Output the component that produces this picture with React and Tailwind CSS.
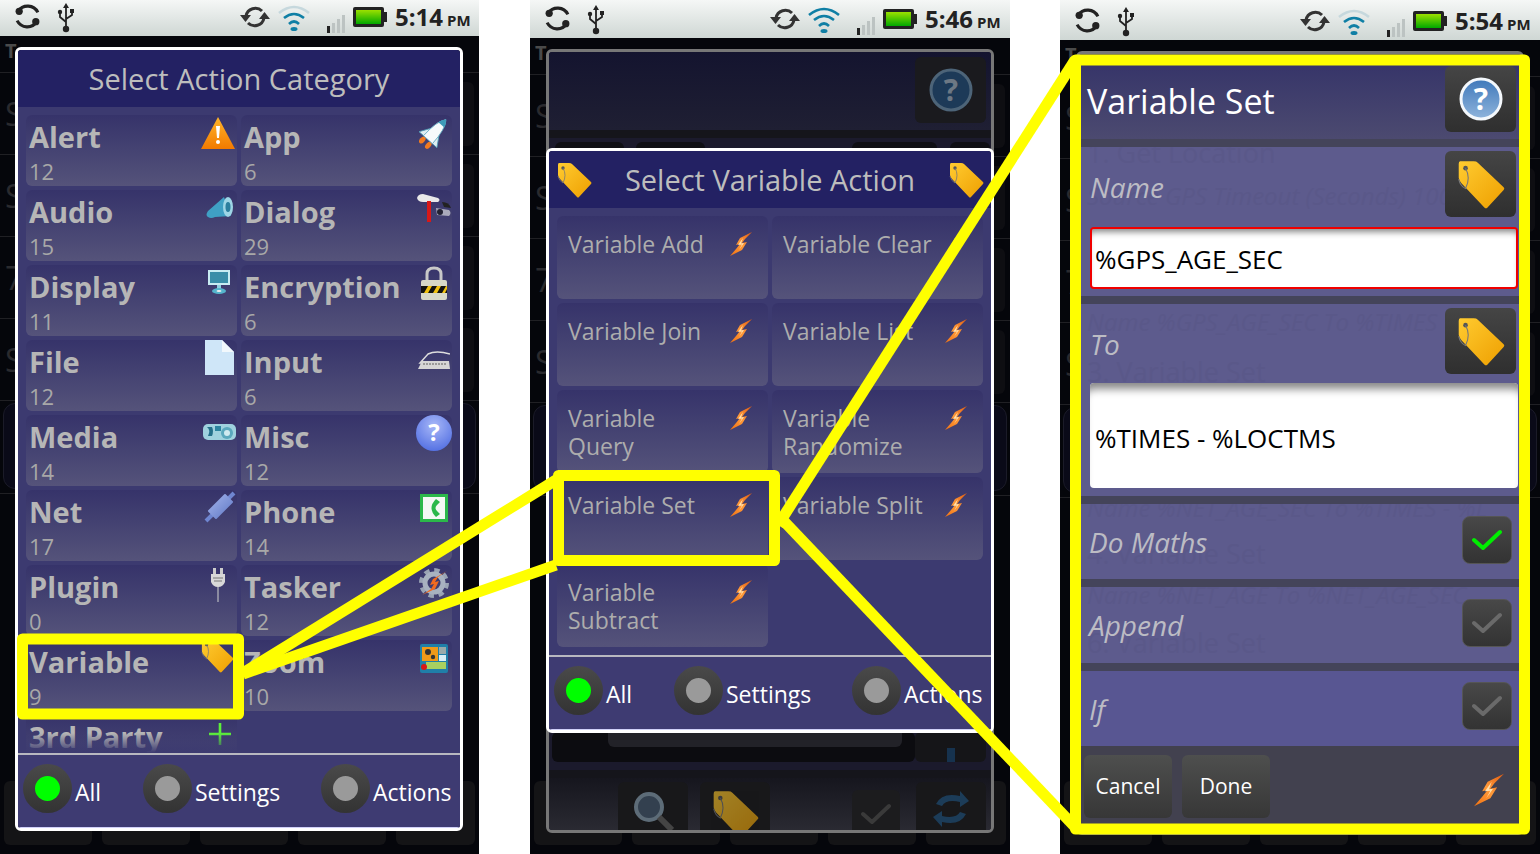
const font = { fontFamily: '"Open Sans", "Noto Sans", sans-serif' };

/* ---------------- ICONS ---------------- */

function SharedDefs() {
  return (
    <svg className="absolute w-0 h-0">
      <defs>
        <linearGradient id="tagFill" x1="0" y1="0" x2="1" y2="1">
          <stop offset="0" stopColor="#ffcb30" />
          <stop offset="1" stopColor="#ee9f00" />
        </linearGradient>
        <linearGradient id="boltFill" x1="1" y1="0" x2="0" y2="1">
          <stop offset="0" stopColor="#e05a10" />
          <stop offset="0.5" stopColor="#ff9a3a" />
          <stop offset="1" stopColor="#f07010" />
        </linearGradient>
        <linearGradient id="warnFill" x1="0" y1="0" x2="0" y2="1">
          <stop offset="0" stopColor="#ffb52a" />
          <stop offset="1" stopColor="#f27a00" />
        </linearGradient>
        <linearGradient id="battFill" x1="0" y1="0" x2="0" y2="1">
          <stop offset="0" stopColor="#9be000" />
          <stop offset="1" stopColor="#00a800" />
        </linearGradient>
        <radialGradient id="qFill" cx="0.5" cy="0.3" r="0.8">
          <stop offset="0" stopColor="#a8b8f8" />
          <stop offset="1" stopColor="#4a68e0" />
        </radialGradient>
        <linearGradient id="helpFill" x1="0" y1="0" x2="0" y2="1">
          <stop offset="0" stopColor="#3f78ba" />
          <stop offset="1" stopColor="#8fb4dc" />
        </linearGradient>
        <linearGradient id="cableFill" x1="0" y1="0" x2="1" y2="1">
          <stop offset="0" stopColor="#a4b4ec" />
          <stop offset="1" stopColor="#5f78c4" />
        </linearGradient>
      </defs>
    </svg>
  );
}

function Tag({ className }) {
  return (
    <svg viewBox="0 0 36 36" className={className}>
      <path d="M3 1 H13 Q15 1 16 2 L35 20 Q36 21 35 22 L23 35 Q22 36 21 35 L4 17 Q2 15 2 13 V3 Q2 1 3 1 Z" fill="url(#tagFill)" />
      <circle cx="7" cy="6" r="1.7" fill="#555" />
      <path d="M7 6 Q11 13 7 21 Q3 19 2 14" fill="none" stroke="#777" strokeWidth="0.8" />
    </svg>
  );
}

function Bolt({ className }) {
  return (
    <svg viewBox="0 0 22 24" className={className}>
      <polygon points="22,0 10,6 6,13 10,12 6,17 0,24 12,18 17,10 12,11 15,7" fill="url(#boltFill)" />
      <polygon points="13,6 8,13 12,12.5 9,18 14,11 11,11.5" fill="#ffe2b0" />
    </svg>
  );
}

function SyncDots({ className }) {
  return (
    <svg viewBox="0 0 26 26" className={className}>
      <path d="M4 8 A 11 11 0 0 1 23 9" fill="none" stroke="#222" strokeWidth="3" />
      <path d="M22 18 A 11 11 0 0 1 3 17" fill="none" stroke="#222" strokeWidth="3" />
      <circle cx="5" cy="8" r="3.5" fill="#222" />
      <circle cx="21" cy="18" r="3.5" fill="#222" />
    </svg>
  );
}

function Usb({ className }) {
  return (
    <svg viewBox="0 0 18 30" className={className}>
      <polygon points="9,0 12,5 6,5" fill="#222" />
      <path d="M9 4 V26 M3 10 V14 L9 19 M15 9 V12 L9 16" fill="none" stroke="#222" strokeWidth="1.8" />
      <circle cx="9" cy="26" r="3.2" fill="#222" />
      <circle cx="3" cy="9" r="2.2" fill="#222" />
      <rect x="13" y="6" width="4" height="4" fill="#222" />
    </svg>
  );
}

function SyncArrows({ className }) {
  return (
    <svg viewBox="0 0 30 26" className={className}>
      <path d="M6 12 A 9.5 9.5 0 0 1 22 7" fill="none" stroke="#333" strokeWidth="3" />
      <path d="M24 14 A 9.5 9.5 0 0 1 8 19" fill="none" stroke="#333" strokeWidth="3" />
      <polygon points="0,11 11,11 5.5,18" fill="#333" />
      <polygon points="19,15 30,15 24.5,8" fill="#333" />
    </svg>
  );
}

function Wifi({ className, dim }) {
  return (
    <svg viewBox="0 0 32 28" className={className}>
      <path d="M1 9 Q16 -3 31 9" fill="none" stroke={dim ? "#c6d8dd" : "#0f7fa5"} strokeWidth="2.6" />
      <path d="M6 14 Q16 6 26 14" fill="none" stroke="#0f7fa5" strokeWidth="2.6" />
      <path d="M11 20 Q16 15 21 20" fill="none" stroke="#0f7fa5" strokeWidth="2.6" />
      <ellipse cx="16" cy="25" rx="3.5" ry="2" fill="#0f7fa5" />
    </svg>
  );
}

function Signal({ className }) {
  return (
    <svg viewBox="0 0 18 18" className={className}>
      <rect x="0" y="11" width="3" height="7" fill="#222" />
      <rect x="5" y="8" width="3" height="10" fill="#bcc3c2" />
      <rect x="10" y="4" width="3" height="14" fill="#bcc3c2" />
      <rect x="15" y="0" width="3" height="18" fill="#bcc3c2" />
    </svg>
  );
}

function Battery({ className }) {
  return (
    <svg viewBox="0 0 35 20" className={className}>
      <rect x="0" y="0" width="31" height="20" rx="2" fill="#222" />
      <rect x="3" y="3" width="25" height="14" fill="url(#battFill)" />
      <rect x="31" y="5" width="3" height="10" fill="#222" />
    </svg>
  );
}

function Warning({ className }) {
  return (
    <svg viewBox="0 0 34 32" className={className}>
      <path d="M17 0 L34 32 H0 Z" fill="url(#warnFill)" />
      <path d="M15 9 H19 L18 21 H16 Z" fill="#fff" />
      <circle cx="17" cy="25" r="2" fill="#fff" />
    </svg>
  );
}

function Rocket({ className }) {
  return (
    <svg viewBox="0 0 30 33" className={className}>
      <g transform="rotate(42 15 16)">
        <ellipse cx="11" cy="29" rx="2.5" ry="4" fill="#f07a20" />
        <ellipse cx="19" cy="29" rx="2.5" ry="4" fill="#f07a20" />
        <path d="M10 14 L3 25 H10 Z M20 14 L27 25 H20 Z" fill="#dfeef2" stroke="#4f9fb8" strokeWidth="0.8" />
        <path d="M15 -2 Q21 5 21 25 H9 Q9 5 15 -2 Z" fill="#f6fafb" stroke="#5aa7c0" strokeWidth="0.8" />
        <path d="M15 -2 Q18 1 19 5 H11 Q12 1 15 -2 Z" fill="#3d9ab8" />
      </g>
    </svg>
  );
}

function Megaphone({ className }) {
  return (
    <svg viewBox="0 0 29 25" className={className}>
      <path d="M19 1 L3 15 Q0 19 3 21 Q6 23 10 21 L26 20 Z" fill="#3fa0c4" />
      <ellipse cx="23" cy="11" rx="5" ry="10" fill="#9ed6e6" />
      <ellipse cx="23" cy="11" rx="2.5" ry="5" fill="#2c7f9e" />
    </svg>
  );
}

function Tools({ className }) {
  return (
    <svg viewBox="0 0 36 30" className={className}>
      <path d="M1 5 Q2 1 7 1 L22 5 Q25 7 22 9 L7 9 Q2 9 1 5 Z" fill="#e8e8e8" />
      <rect x="11" y="8" width="4" height="21" fill="#d81818" />
      <path d="M20 15 L33 17 Q36 20 33 23 L21 22 Z" fill="#aab" />
      <circle cx="24" cy="19" r="3" fill="#223" />
      <path d="M26 9 Q33 9 35 15 L28 14 Z" fill="#222" />
    </svg>
  );
}

function Monitor({ className }) {
  return (
    <svg viewBox="0 0 22 25" className={className}>
      <rect x="0" y="0" width="22" height="15" fill="#c8ecf2" />
      <rect x="2" y="2" width="18" height="11" fill="#3a8ea8" />
      <rect x="9" y="15" width="4" height="4" fill="#8fd0e0" />
      <ellipse cx="11" cy="21" rx="7" ry="3" fill="#55b5cc" />
      <ellipse cx="11" cy="21" rx="2.5" ry="1" fill="#eee" />
    </svg>
  );
}

function Lock({ className }) {
  return (
    <svg viewBox="0 0 26 34" className={className}>
      <path d="M6 16 V8 Q6 2 13 2 Q20 2 20 8 V16" fill="none" stroke="#c8c8c8" strokeWidth="3" />
      <rect x="0" y="14" width="26" height="20" rx="2" fill="#d8d8c8" />
      <rect x="0" y="20" width="26" height="7" fill="#111" />
      <path d="M3 27 L7 20 H11 L7 27 Z M12 27 L16 20 H20 L16 27 Z M21 27 L25 20 H26 V23 L24 27 Z" fill="#f0c010" />
    </svg>
  );
}

function FileIcon({ className }) {
  return (
    <svg viewBox="0 0 29 35" className={className}>
      <path d="M0 0 H17 L29 12 V35 H0 Z" fill="#cfe6f8" />
      <path d="M17 0 L29 12 H17 Z" fill="#f2f8fc" />
    </svg>
  );
}

function Keyboard({ className }) {
  return (
    <svg viewBox="0 0 32 20" className={className}>
      <path d="M32 3 Q18 -1 10 3 L2 12 H30" fill="none" stroke="#ddd" strokeWidth="1.5" />
      <path d="M4 10 H31 L32 18 H0 Z" fill="#d6d6d6" />
      <path d="M5 13 H28" stroke="#9a9a9a" strokeWidth="2" strokeDasharray="2 1" />
    </svg>
  );
}

function Camera({ className }) {
  return (
    <svg viewBox="0 0 33 18" className={className}>
      <rect x="0" y="1" width="33" height="16" rx="5" fill="#9fd2de" />
      <path d="M4 4 Q8 7 5 13 H9 Q11 8 9 4 Z" fill="#24708a" />
      <rect x="12" y="3" width="6" height="5" fill="#2c85a0" />
      <circle cx="24" cy="10" r="6" fill="#5aa8bd" />
      <circle cx="24" cy="10" r="3" fill="#cfeaf0" />
    </svg>
  );
}

function QuestionBall({ className }) {
  return (
    <svg viewBox="0 0 36 36" className={className}>
      <circle cx="18" cy="18" r="18" fill="url(#qFill)" />
      <text x="18" y="26" textAnchor="middle" fontSize="24" fontWeight="700" fill="#fff" style={font}>?</text>
    </svg>
  );
}

function Cable({ className }) {
  return (
    <svg viewBox="0 0 32 32" className={className}>
      <path d="M30 2 L2 30" stroke="#6f86d0" strokeWidth="4" />
      <path d="M21 4 L28 11 L12 27 L5 20 Z" fill="url(#cableFill)" stroke="url(#cableFill)" strokeWidth="2" strokeLinejoin="round" />
    </svg>
  );
}

function PhoneIcon({ className }) {
  return (
    <svg viewBox="0 0 28 28" className={className}>
      <rect x="0" y="0" width="28" height="28" fill="#2bb84a" />
      <rect x="3" y="3" width="22" height="22" fill="#f4f8f4" />
      <path d="M16 5 Q7 14 16 23 L20 20 L17 17 Q14 14 17 11 L20 8 Z" fill="#2bb84a" />
    </svg>
  );
}

function Plug({ className }) {
  return (
    <svg viewBox="0 0 14 34" className={className}>
      <rect x="2" y="0" width="3" height="7" fill="#ccc" />
      <rect x="9" y="0" width="3" height="7" fill="#ccc" />
      <path d="M0 6 H14 V14 Q12 19 7 19 Q2 19 0 14 Z" fill="#d8d8d8" />
      <path d="M2 10 H12 M3 13 H11" stroke="#777" strokeWidth="1" />
      <rect x="6" y="19" width="2" height="15" fill="#8a8aa0" />
    </svg>
  );
}

function Gear({ className }) {
  return (
    <svg viewBox="0 0 30 30" className={className}>
      <circle cx="15" cy="15" r="12" fill="none" stroke="#9aa4b4" strokeWidth="6" strokeDasharray="5 4.4" />
      <circle cx="15" cy="15" r="9" fill="none" stroke="#a8b2c0" strokeWidth="5" />
      <polygon points="28,3 14,11 11,17 15,16 12,21 3,27 16,21 20,13 16,14 19,9" fill="#f06a20" />
    </svg>
  );
}

function ZoomIcon({ className }) {
  return (
    <svg viewBox="0 0 28 29" className={className}>
      <rect x="0" y="0" width="28" height="29" rx="2" fill="#1f7fa8" />
      <rect x="2" y="3" width="16" height="14" fill="#f09a18" />
      <circle cx="8" cy="8" r="3" fill="#333" />
      <circle cx="13" cy="13" r="2.2" fill="#333" />
      <rect x="19" y="3" width="7" height="7" fill="#9aa" />
      <rect x="19" y="11" width="7" height="6" fill="#d8eef4" />
      <rect x="6" y="18" width="20" height="7" fill="#a8d060" />
      <circle cx="4" cy="23" r="3" fill="#d81818" />
    </svg>
  );
}

function Plus({ className }) {
  return (
    <svg viewBox="0 0 22 22" className={className}>
      <path d="M11 0 V22 M0 11 H22" stroke="#5cf03a" strokeWidth="2.6" />
    </svg>
  );
}

function Help({ className, dim }) {
  return (
    <svg viewBox="0 0 44 44" className={className}>
      <circle cx="22" cy="22" r="20" fill={dim ? "#1d3a58" : "url(#helpFill)"} stroke={dim ? "#4d6478" : "#f4f8fc"} strokeWidth="3" />
      <text x="22" y="33" textAnchor="middle" fontSize="30" fontWeight="700" fill={dim ? "#6d7884" : "#fff"} style={font}>?</text>
    </svg>
  );
}

function Check({ className, color }) {
  return (
    <svg viewBox="0 0 30 22" className={className}>
      <path d="M2 11 L11 19 L28 3" fill="none" stroke={color} strokeWidth="4" strokeLinecap="round" strokeLinejoin="round" />
    </svg>
  );
}

function Magnifier({ className }) {
  return (
    <svg viewBox="0 0 42 42" className={className}>
      <circle cx="17" cy="17" r="13" fill="#33404f" stroke="#5d6c78" strokeWidth="4" />
      <path d="M27 27 L40 40" stroke="#444" strokeWidth="6" />
    </svg>
  );
}

function Refresh({ className }) {
  return (
    <svg viewBox="0 0 38 38" className={className}>
      <path d="M4 14 Q10 2 28 6 L28 1 L37 11 L28 17 V12 Q14 9 10 16 Z" fill="#1c3c58" />
      <path d="M34 24 Q28 36 10 32 L10 37 L1 27 L10 21 V26 Q24 29 28 22 Z" fill="#1c3c58" />
    </svg>
  );
}

/* ---------------- SHARED PIECES ---------------- */

function StatusBar({ time, wifiDim, heightClass }) {
  return (
    <div className={`${heightClass} shrink-0 flex items-end pb-[3px] pl-[14px] bg-gradient-to-b from-[#f5f7f6] to-[#cfd7d4]`}>
      <SyncDots className="w-[27px] h-[27px] mb-[3px]" />
      <Usb className="w-[18px] h-[30px] ml-[16px]" />
      <SyncArrows className="w-[30px] h-[26px] mb-[3px] ml-[165px]" />
      <Wifi dim={wifiDim} className="w-[32px] h-[28px] ml-[8px] mb-[1px]" />
      <Signal className="w-[18px] h-[18px] ml-[17px]" />
      <Battery className="w-[35px] h-[20px] ml-[8px] mb-[6px]" />
      <div className="ml-[7px] mb-[1px] flex items-baseline text-[#222] font-bold whitespace-nowrap" style={font}>
        <span className="text-[24px] leading-[24px]">{time}</span>
        <span className="text-[15px] leading-[24px] ml-[4px]">PM</span>
      </div>
    </div>
  );
}

// the task screen that stays behind the dialogs
function TaskScreen() {
  const letters = ["S", "S", "7", "S"];
  return (
    <div className="flex-1 min-h-0 flex flex-col bg-[#05060b]" style={font}>
      <div className="h-[37px] shrink-0 pl-[5px] pt-[2px] border-b border-[#202024] text-[#4a4a4a] font-bold text-[20px] leading-[26px]">T</div>
      {letters.map((letter, i) => (
        <div key={i} className="h-[82px] shrink-0 flex items-center justify-between pl-[5px] pr-[5px] border-b border-[#202024]">
          <span className="text-[#2a2a2e] text-[32px]">{letter}</span>
          <div className="w-[40px] h-[64px] rounded-md bg-[#0e0e12]" />
        </div>
      ))}
      <div className="h-[86px] shrink-0 mx-[3px] mt-[2px] rounded-xl border border-[#1b1b28] bg-[#0a0a18]" />
      <div className="flex-1 border-t border-[#202024] mt-[4px]" />
      <div className="shrink-0 flex gap-[10px] px-[4px] pb-[9px]">
        <div className="w-[88px] h-[64px] rounded-md bg-[#141416]" />
        <div className="w-[88px] h-[64px] rounded-md bg-[#141416]" />
        <div className="w-[88px] h-[64px] rounded-md bg-[#141416]" />
        <div className="w-[88px] h-[64px] rounded-md bg-[#141416]" />
        <div className="flex-1 h-[64px] rounded-md bg-[#141416]" />
      </div>
    </div>
  );
}

function Radio({ on }) {
  return (
    <div className="w-[49px] h-[49px] shrink-0 rounded-full bg-gradient-to-b from-[#4a4a4a] to-[#333] flex items-center justify-center">
      <div className={`w-[25px] h-[25px] rounded-full ${on ? "bg-[#00ff00]" : "bg-[#9a9a9a]"}`} />
    </div>
  );
}

function RadioFooter() {
  return (
    <div className="h-[73px] shrink-0 flex pl-[5px] pt-[9px] bg-[#3e3b72] border-b border-[#d0d0f8]" style={font}>
      <div className="w-[120px] flex gap-[3px]">
        <Radio on />
        <span className="text-white text-[23px] leading-[56px]">All</span>
      </div>
      <div className="w-[178px] flex gap-[3px]">
        <Radio />
        <span className="text-white text-[23px] leading-[56px]">Settings</span>
      </div>
      <div className="flex gap-[3px]">
        <Radio />
        <span className="text-white text-[23px] leading-[56px]">Actions</span>
      </div>
    </div>
  );
}

/* ---------------- PHONE 1 ---------------- */

const categories = [
  { name: "Alert", count: 12, icon: <Warning className="absolute left-[175px] top-[2px] w-[34px] h-[32px]" /> },
  { name: "App", count: 6, icon: <Rocket className="absolute left-[178px] top-[2px] w-[30px] h-[33px]" /> },
  { name: "Audio", count: 15, icon: <Megaphone className="absolute left-[179px] top-[6px] w-[29px] h-[25px]" /> },
  { name: "Dialog", count: 29, icon: <Tools className="absolute left-[175px] top-[3px] w-[36px] h-[30px]" /> },
  { name: "Display", count: 11, icon: <Monitor className="absolute left-[182px] top-[5px] w-[22px] h-[25px]" /> },
  { name: "Encryption", count: 6, icon: <Lock className="absolute left-[180px] top-[1px] w-[26px] h-[34px]" /> },
  { name: "File", count: 12, icon: <FileIcon className="absolute left-[179px] top-0 w-[29px] h-[35px]" /> },
  { name: "Input", count: 6, icon: <Keyboard className="absolute left-[177px] top-[11px] w-[32px] h-[20px]" /> },
  { name: "Media", count: 14, icon: <Camera className="absolute left-[177px] top-[8px] w-[33px] h-[18px]" /> },
  { name: "Misc", count: 12, icon: <QuestionBall className="absolute left-[175px] top-0 w-[36px] h-[36px]" /> },
  { name: "Net", count: 17, icon: <Cable className="absolute left-[178px] top-[1px] w-[32px] h-[32px]" /> },
  { name: "Phone", count: 14, icon: <PhoneIcon className="absolute left-[179px] top-[4px] w-[28px] h-[28px]" /> },
  { name: "Plugin", count: 0, icon: <Plug className="absolute left-[185px] top-[3px] w-[14px] h-[34px]" /> },
  { name: "Tasker", count: 12, icon: <Gear className="absolute left-[178px] top-[3px] w-[30px] h-[30px]" /> },
  { name: "Variable", count: 9, icon: <Tag className="absolute left-[174px] top-[-1px] w-[34px] h-[34px]" /> },
  { name: "Zoom", count: 10, icon: <ZoomIcon className="absolute left-[179px] top-[4px] w-[28px] h-[29px]" /> },
  { name: "3rd Party", count: "", icon: <Plus className="absolute left-[183px] top-[8px] w-[22px] h-[22px]" /> },
];

function CategoryDialog() {
  return (
    <div className="absolute left-[15px] top-[47px] w-[448px] h-[784px] border-[3px] border-white rounded-md flex flex-col overflow-hidden" style={font}>
      <div className="h-[57px] shrink-0 flex items-center justify-center bg-[#232163] text-[#bdbdbd] text-[29px]">Select Action Category</div>
      <div className="relative h-[646px] shrink-0 overflow-hidden bg-[#3c3a70] px-2 pt-2 grid grid-cols-2 gap-1 auto-rows-[71px]">
        {categories.map(cat => (
          <div key={cat.name} className="relative rounded-md bg-gradient-to-b from-[#36336a] to-[#55537a] pl-[3px] text-[#b6b6b6]">
            <div className="font-bold text-[29px] leading-[44px]">{cat.name}</div>
            <div className="text-[22px] leading-[24px] text-[#a8a8a8]">{cat.count}</div>
            {cat.icon}
          </div>
        ))}
        <div className="absolute left-0 right-0 bottom-0 h-[20px] bg-gradient-to-b from-transparent to-[#3c3a70]" />
      </div>
      <div className="h-[2px] shrink-0 bg-[#b8b8c0]" />
      <RadioFooter />
    </div>
  );
}

/* ---------------- PHONE 2 ---------------- */

const variableActions = [
  "Variable Add", "Variable Clear", "Variable Join", "Variable List",
  "Variable Query", "Variable Randomize", "Variable Set", "Variable Split",
  "Variable Subtract",
];

function BackDialog() {
  return (
    <div className="absolute left-[16px] top-[49px] w-[448px] h-[784px] border-[3px] border-[#777] rounded-md flex flex-col overflow-hidden bg-[#1b1a2c]">
      <div className="h-[78px] shrink-0 flex justify-end pr-[5px] pt-[5px] bg-gradient-to-b from-[#14142f] to-[#1f1f33]">
        <div className="w-[71px] h-[66px] rounded-md bg-[#1a1a1e] flex items-center justify-center">
          <Help dim className="w-[44px] h-[44px]" />
        </div>
      </div>
      <div className="h-[8px] shrink-0 bg-[#15151b]" />
      <div className="flex-1 flex flex-col justify-between">
        <div className="flex pt-[4px] pl-[6px] pr-[1px]">
          <div className="w-[69px] h-[20px] rounded-md bg-[#0f0f14]" />
          <div className="w-[69px] h-[20px] rounded-md bg-[#0f0f14] ml-[12px]" />
          <div className="w-[85px] h-[20px] rounded-md bg-[#0f0f14] ml-[147px]" />
          <div className="w-[40px] h-[20px] rounded-md bg-[#0f0f14] ml-[13px]" />
        </div>
        <div className="flex items-end pl-[3px] pr-[5px] pb-[8px]">
          <div className="w-[363px] h-[30px] rounded-md bg-[#0c0c10] pl-[56px] pr-[13px]">
            <div className="h-[15px] rounded-b-md bg-[#222228]" />
          </div>
          <div className="w-[71px] h-[30px] rounded-md bg-[#151518] flex justify-center items-end">
            <div className="w-[8px] h-[14px] bg-[#16324e]" />
          </div>
        </div>
      </div>
      <div className="h-[8px] shrink-0 bg-[#15151b]" />
      <div className="h-[52px] shrink-0 flex pl-[69px] pt-[4px] bg-gradient-to-b from-[#16161e] to-[#2a2a32] overflow-hidden">
        <div className="w-[70px] h-[62px] shrink-0 rounded-md bg-[#18181a] flex justify-center pt-[8px]">
          <Magnifier className="w-[42px] h-[42px]" />
        </div>
        <div className="w-[70px] h-[62px] shrink-0 rounded-md bg-[#18181a] ml-[12px] flex justify-center pt-[8px]">
          <Tag className="w-[48px] h-[48px] opacity-60" />
        </div>
        <div className="w-[48px] h-[48px] shrink-0 rounded-md bg-[#1c1c1e] ml-[82px] mt-[8px] flex items-center justify-center">
          <Check color="#3a3a3a" className="w-[30px] h-[22px]" />
        </div>
        <div className="w-[70px] h-[62px] shrink-0 rounded-md bg-[#18181a] ml-[16px] flex justify-center pt-[8px]">
          <Refresh className="w-[38px] h-[38px]" />
        </div>
      </div>
    </div>
  );
}

function ActionDialog() {
  return (
    <div className="absolute left-[16px] top-[148px] w-[448px] h-[585px] border-[3px] border-white rounded-md flex flex-col overflow-hidden" style={font}>
      <div className="h-[57px] shrink-0 flex items-center justify-between px-[7px] bg-[#232163] text-[#bdbdbd] text-[29px]">
        <Tag className="w-[36px] h-[36px]" />
        <span>Select Variable Action</span>
        <Tag className="w-[36px] h-[36px]" />
      </div>
      <div className="flex-1 min-h-0 bg-[#3c3a70] px-2 pt-2 grid grid-cols-2 gap-1 auto-rows-[83px]">
        {variableActions.map(name => (
          <div key={name} className="relative rounded-md bg-gradient-to-b from-[#36336a] to-[#55537a] pl-[11px] pr-[45px] pt-[14px] text-[#adadad] text-[23px] leading-[28px]">
            {name}
            <Bolt className="absolute left-[173px] top-[16px] w-[22px] h-[24px]" />
          </div>
        ))}
      </div>
      <div className="h-[2px] shrink-0 bg-[#b8b8c0]" />
      <RadioFooter />
    </div>
  );
}

/* ---------------- PHONE 3 ---------------- */

function SquareButton({ children }) {
  return (
    <div className="w-[71px] h-[66px] shrink-0 rounded-md bg-gradient-to-b from-[#454545] to-[#2f2f2f] flex items-center justify-center">
      {children}
    </div>
  );
}

function Ghost({ className, children }) {
  return <span className={`absolute whitespace-nowrap text-[#5a5889] ${className}`}>{children}</span>;
}

function CheckRow({ label, on, ghost, rowClass }) {
  return (
    <div className={`relative flex-1 flex items-center justify-between pl-[10px] pr-[9px] ${rowClass}`}>
      {ghost}
      <span className="relative italic text-[#bcbcc4] text-[28px] pt-[1px]">{label}</span>
      <div className="relative w-[50px] h-[48px] mb-[4px] rounded-lg bg-gradient-to-b from-[#484848] to-[#333] border border-[#555] flex items-center justify-center">
        <Check color={on ? "#00ee00" : "#6a6a6a"} className="w-[30px] h-[22px]" />
      </div>
    </div>
  );
}

function VariableSetDialog() {
  return (
    <div className="absolute left-[16px] top-[51px] w-[448px] h-[784px] border-[3px] border-[#777] rounded-md flex flex-col overflow-hidden bg-[#44445a]" style={font}>
      <div className="h-[85px] shrink-0 flex justify-between items-end pl-[8px] pr-[5px] pb-[7px] bg-gradient-to-b from-[#343268] to-[#4c4a70]">
        <span className="text-white text-[34px] leading-[66px] mb-[-2px]">Variable Set</span>
        <SquareButton><Help className="w-[44px] h-[44px]" /></SquareButton>
      </div>
      <div className="h-[8px] shrink-0" />
      <div className="relative h-[149px] shrink-0 overflow-hidden bg-[#5d5b8d] pt-[4px] pl-[11px] pr-[5px]">
        <Ghost className="left-[8px] top-[-14px] text-[27px]">1.  Get Location</Ghost>
        <Ghost className="left-[8px] top-[31px] text-[24px] italic">Source GPS   Timeout (Seconds) 100</Ghost>
        <div className="relative flex justify-between items-center">
          <span className="italic text-[#bcbcc4] text-[28px] mt-[5px]">Name</span>
          <SquareButton><Tag className="w-[49px] h-[49px]" /></SquareButton>
        </div>
        <div className="relative mt-[10px] mr-[-2px] h-[62px] bg-white border-2 border-[#f00000] rounded-sm flex items-center pl-[3px] pt-[2px] text-black text-[26px] shadow-[inset_0_7px_6px_-4px_#888]">%GPS_AGE_SEC</div>
      </div>
      <div className="h-[8px] shrink-0" />
      <div className="relative h-[192px] shrink-0 overflow-hidden bg-[#5d5b8d] pt-[4px] pl-[11px] pr-[5px]">
        <Ghost className="left-[8px] top-[0px] text-[24px] italic">Name %GPS_AGE_SEC  To %TIMES</Ghost>
        <Ghost className="left-[8px] top-[48px] text-[27px]">3.  Variable Set</Ghost>
        <div className="relative flex justify-between items-center">
          <span className="italic text-[#bcbcc4] text-[28px] mt-[5px]">To</span>
          <SquareButton><Tag className="w-[49px] h-[49px]" /></SquareButton>
        </div>
        <div className="relative mt-[9px] mr-[-2px] h-[105px] bg-white rounded-sm flex items-center pl-[5px] pt-[6px] text-black text-[26px] shadow-[inset_0_12px_8px_-6px_#888]">%TIMES - %LOCTMS</div>
      </div>
      <div className="h-[8px] shrink-0" />
      <CheckRow
        label="Do Maths"
        on
        rowClass="bg-[#5d5b8d] overflow-hidden"
        ghost={
          <>
            <Ghost className="left-[8px] top-[-14px] text-[24px] italic">Name %NET_AGE_SEC  To %TIMES - %L</Ghost>
            <Ghost className="left-[8px] top-[30px] text-[27px]">4.  Variable Set</Ghost>
          </>
        }
      />
      <div className="h-[8px] shrink-0" />
      <CheckRow
        label="Append"
        rowClass="bg-[#5d5b8d] overflow-hidden"
        ghost={
          <>
            <Ghost className="left-[8px] top-[-10px] text-[24px] italic">Name %NET_AGE  To %NET_AGE_SEC</Ghost>
            <Ghost className="left-[8px] top-[36px] text-[27px]">6.  Variable Set</Ghost>
          </>
        }
      />
      <div className="h-[8px] shrink-0" />
      <CheckRow label="If" rowClass="bg-[#585692]" />
      <div className="h-[86px] shrink-0 flex items-start gap-[10px] pl-[5px] pt-[9px] bg-[#42414f] relative">
        <div className="w-[88px] h-[63px] rounded-md bg-gradient-to-b from-[#4e4f4e] to-[#373737] flex items-center justify-center text-white text-[21px]">Cancel</div>
        <div className="w-[88px] h-[63px] rounded-md bg-gradient-to-b from-[#4e4f4e] to-[#373737] flex items-center justify-center text-white text-[21px]">Done</div>
        <Bolt className="absolute right-[17px] top-[26px] w-[30px] h-[36px]" />
      </div>
    </div>
  );
}

/* ---------------- YELLOW CALLOUTS ---------------- */

function Callouts() {
  return (
    <svg viewBox="0 0 1540 854" className="absolute left-0 top-0 w-[1540px] h-[854px] pointer-events-none">
      <g fill="none" stroke="#ffff00" strokeWidth="11" strokeLinejoin="round">
        <rect x="22.5" y="639" width="216" height="75" />
        <rect x="558.5" y="475.5" width="216" height="85" />
        <rect x="1075.5" y="60" width="449" height="769" />
        <path d="M243 673 L556 480" />
        <path d="M243 674 L556 565" />
        <path d="M778 525 L1075 60" />
        <path d="M778 515 L1075 827" />
      </g>
    </svg>
  );
}

export default function App() {
  return (
    <div className="relative w-[1540px] h-[854px] flex bg-white overflow-hidden">
      <SharedDefs />
      <div className="relative w-[479px] h-full flex flex-col overflow-hidden">
        <StatusBar time="5:14" wifiDim heightClass="h-[36px]" />
        <TaskScreen />
        <CategoryDialog />
      </div>
      <div className="relative w-[480px] h-full ml-[51px] flex flex-col overflow-hidden">
        <StatusBar time="5:46" heightClass="h-[38px]" />
        <TaskScreen />
        <BackDialog />
        <ActionDialog />
      </div>
      <div className="relative w-[480px] h-full ml-[50px] flex flex-col overflow-hidden">
        <StatusBar time="5:54" wifiDim heightClass="h-[40px]" />
        <TaskScreen />
        <VariableSetDialog />
      </div>
      <Callouts />
    </div>
  );
}
